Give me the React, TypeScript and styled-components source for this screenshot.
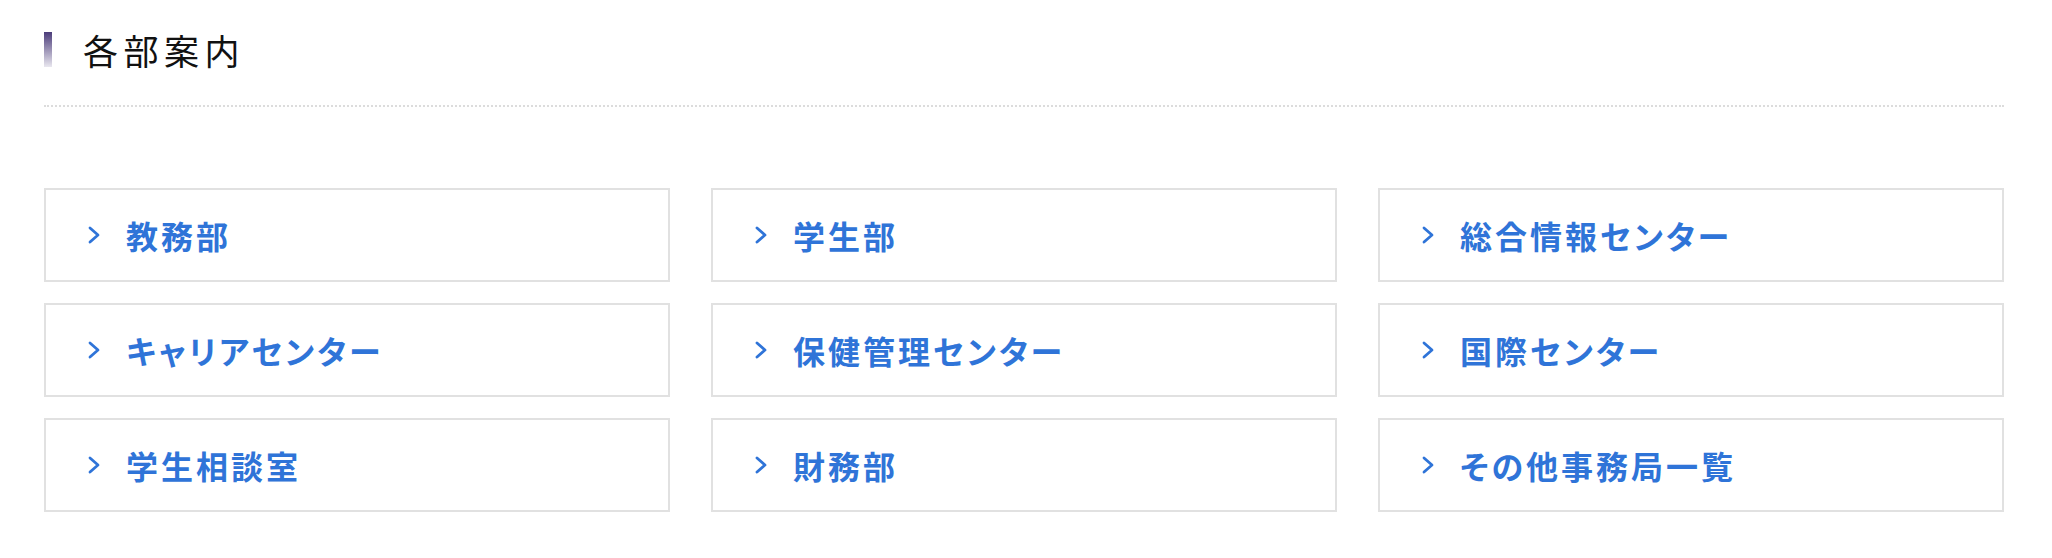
import styled, { createGlobalStyle } from "styled-components";

const GlobalStyle = createGlobalStyle`
  html, body {
    margin: 0;
    padding: 0;
    background: #fff;
  }
  body {
    font-family: "Noto Sans CJK JP", "Noto Sans", sans-serif;
  }
`;

const Section = styled.section`
  padding: 32px 48px 40px 44px;
`;

const Heading = styled.h2`
  display: flex;
  align-items: center;
  gap: 31px;
  margin: 0;
  padding-bottom: 38px;
  border-bottom: 2px dotted #dcdcdc;
  font-size: 35px;
  font-weight: 400;
  line-height: 35px;
  letter-spacing: 5.5px;
  color: #111;
`;

const HeadingBar = styled.span`
  display: block;
  width: 8px;
  height: 35px;
  background: linear-gradient(to bottom, #4b3c7a, #e9e7ef);
`;

const Grid = styled.ul`
  list-style: none;
  margin: 81px 0 0;
  padding: 0;
  display: grid;
  grid-template-columns: repeat(3, 1fr);
  column-gap: 41px;
  row-gap: 21px;
`;

const Card = styled.li`
  display: flex;
  align-items: center;
  gap: 26px;
  height: 94px;
  box-sizing: border-box;
  padding-left: 42px;
  border: 2px solid #e1e1e1;
  background: #fff;
`;

const CardLink = styled.a`
  font-size: 32px;
  font-weight: 700;
  letter-spacing: 3px;
  font-feature-settings: "palt";
  color: #2f74d8;
  text-decoration: none;
`;

const Chevron = () => (
  <svg width="12" height="18" viewBox="0 0 12 18" fill="none">
    <polyline
      points="2,2 10,9 2,16"
      stroke="#2f74d8"
      strokeWidth="2.8"
      strokeLinecap="round"
      strokeLinejoin="round"
    />
  </svg>
);

const items = [
  "教務部",
  "学生部",
  "総合情報センター",
  "キャリアセンター",
  "保健管理センター",
  "国際センター",
  "学生相談室",
  "財務部",
  "その他事務局一覧",
];

export default function App() {
  return (
    <>
      <GlobalStyle />
      <Section>
        <Heading>
          <HeadingBar />
          各部案内
        </Heading>
        <Grid>
          {items.map((label) => (
            <Card key={label}>
              <Chevron />
              <CardLink href="#">{label}</CardLink>
            </Card>
          ))}
        </Grid>
      </Section>
    </>
  );
}
